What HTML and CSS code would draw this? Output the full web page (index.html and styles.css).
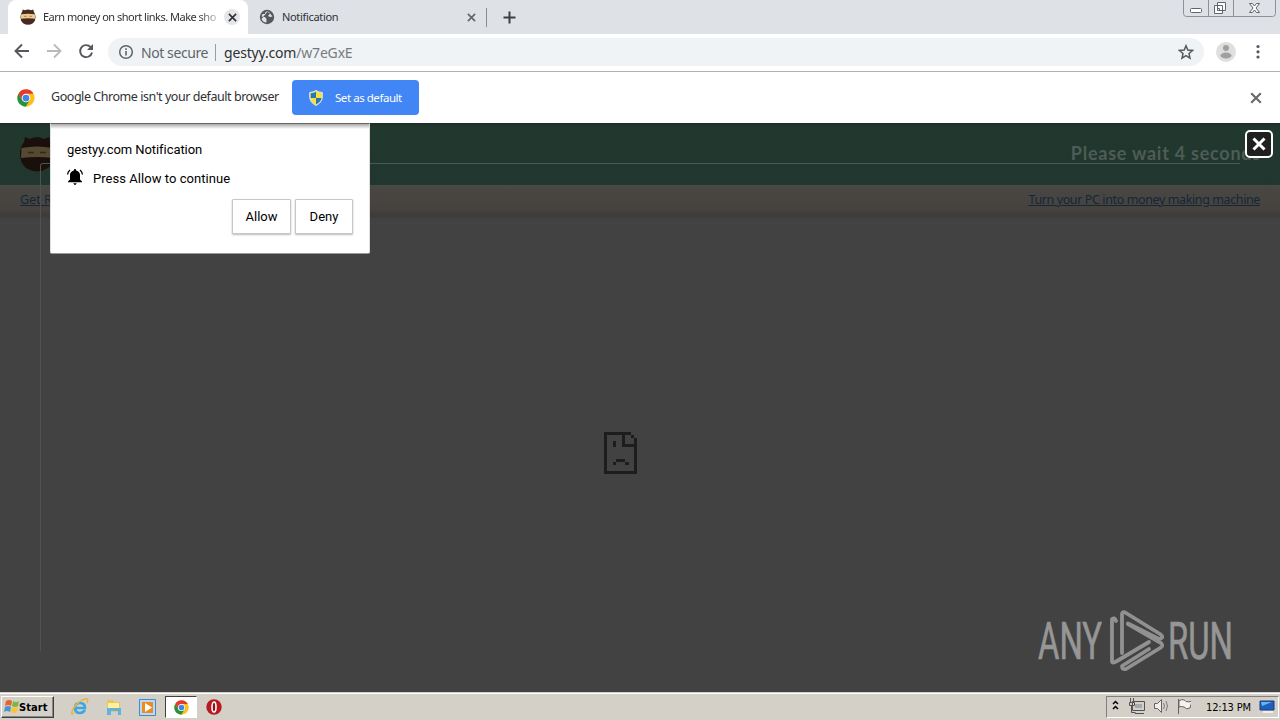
FILE: index.html
```html
<!DOCTYPE html>
<html lang="en"><head><meta charset="utf-8"><title>Notification</title><link rel="stylesheet" href="styles.css"></head>
<body>
<svg width="0" height="0" class="defs">
<symbol id="chrome" viewBox="0 0 48 48"><circle cx="24" cy="24" r="23" fill="#fbc116"/><path d="M4 12.5A23 23 0 0 1 44 12.5H24L14 30Z" fill="#e33b2e"/><path d="M4 12.5A23 23 0 0 0 23 47L34 30 24 35 14 30Z" fill="#229342"/><circle cx="24" cy="24" r="11.500" fill="#fff"/><circle cx="24" cy="24" r="9" fill="#4285e8"/></symbol>
<symbol id="ninja" viewBox="0 0 34 36"><path d="M4 6 5 1 10 3Q17 -1 24 3L29 1 30 6Q34 11 34 18Q34 27 28 32Q17 39 6 32Q0 27 0 18Q0 11 4 6Z" fill="#49291f"/><path d="M1.500 12Q17 9 32.500 12L33 22Q17 20 1 22Z" fill="#e8cd8d"/><path d="M8 16.500h6M20 16.500h6" stroke="#8c6845" stroke-width="1.500"/></symbol>
<symbol id="x" viewBox="0 0 10 10"><path d="M1 1 9 9M9 1 1 9" stroke="currentColor" stroke-width="1.800" fill="none"/></symbol>
</svg>
<header class="tabs">
 <div class="tab active"><svg class="fav"><use href="#ninja"/></svg><span class="tabtext fade">Earn money on short links. Make sho</span><span class="round"><svg width="9" height="9"><use href="#x"/></svg></span></div>
 <div class="tab second"><svg class="globe" viewBox="0 0 16 16"><circle cx="8" cy="8" r="7.200" fill="#55595e"/><path d="M9 2Q5.500 3 6 5H3.500L2.500 7.500 6 8l1.500 2v3.500Q4 13.500 2.500 10M9 2q0 2 2 2.500L9 7l2 1 2.500-.5" fill="#dee1e6"/></svg><span class="tabtext">Notification</span><svg class="tabx" width="9" height="9"><use href="#x"/></svg></div>
 <svg class="plus" width="13" height="13" viewBox="0 0 13 13"><path d="M6.500 .5v12M.5 6.500h12" stroke="#3c4043" stroke-width="2"/></svg>
 <svg class="winctl" width="94" height="18" viewBox="0 0 94 18"><path d="M.5 0V13.500Q.5 16.500 3.500 16.500H89.500Q92.500 16.500 92.500 13.500V0M25.500 0V16M50.500 0V16" fill="none" stroke="#8e9197"/><rect x="7.500" y="8.500" width="11" height="4" rx="1" fill="#fff" stroke="#62656c"/><path d="M34.500 2.500h8v8h-8zM31.500 5.500h8v8h-8zM34.500 8.500h2v2h-2z" fill="#fff" stroke="#62656c"/><path d="m66.500 3.500h3l2 2.500 2-2.500h3l-3.500 4.500 3.500 4.500h-3l-2-2.500-2 2.500h-3l3.500-4.500z" fill="#fff" stroke="#62656c"/></svg>
</header>
<div class="toolbar">
 <svg class="nav" width="100" height="36" viewBox="0 0 100 36" fill="none" stroke-width="1.900"><path d="M29 17H16M22 10.500 15.500 17l6.500 6.500" stroke="#55585c"/><path d="M47 17H60M54 10.500 60.500 17 54 23.500" stroke="#b8babd"/><path d="M90.500 13A6 6 0 1 0 92 18.500" stroke="#55585c"/><path d="M93 10v6h-6z" fill="#55585c"/></svg>
 <div class="omni"><svg width="16" height="16" viewBox="0 0 16 16"><circle cx="8" cy="8" r="6.300" fill="none" stroke="#5f6368" stroke-width="1.500"/><path d="M8 7v4.500M8 4.300v1.600" stroke="#5f6368" stroke-width="1.600"/></svg><span class="notsec">Not secure</span><i></i><span class="url">gestyy.com<b>/w7eGxE</b></span><svg class="star" width="16" height="16" viewBox="0 0 16 16"><path d="m8 1.800 1.800 4.300 4.700.4-3.500 3 1 4.600-4-2.400-4 2.400 1-4.600-3.500-3 4.700-.4Z" fill="none" stroke="#55595e" stroke-width="1.500"/></svg></div>
 <svg class="avatar" width="20" height="20" viewBox="0 0 20 20"><circle cx="10" cy="10" r="10" fill="#dfdfdf"/><circle cx="10" cy="6" r="3" fill="#a0a0a0"/><ellipse cx="10" cy="13.500" rx="5.500" ry="3" fill="#a0a0a0"/></svg>
 <svg class="dots" width="4" height="16" viewBox="0 0 4 16" fill="#55595e"><circle cx="2" cy="2.500" r="1.600"/><circle cx="2" cy="7.800" r="1.600"/><circle cx="2" cy="13" r="1.600"/></svg>
</div>
<div class="infobar"><svg width="18" height="18"><use href="#chrome"/></svg><span class="infotext">Google Chrome isn't your default browser</span><button><svg width="14" height="16" viewBox="0 0 14 16"><path d="M7 .5Q10 2.500 13.300 2.500V7Q13 12.500 7 15.500 1 12.500.7 7V2.500Q4 2.500 7 .5Z" fill="#f8df40" stroke="#d7e8ed"/><path d="M7 1.800V8H1.700V3.300Q4 3.300 7 1.800ZM7 8h5.400Q12 12 7 14.400Z" fill="#2677b8"/></svg><span>Set as default</span></button><svg class="infox" width="12" height="12"><use href="#x"/></svg></div>
<main>
 <div class="green"><svg class="logo" width="34" height="36"><use href="#ninja"/></svg><span class="wait">Please wait 4 seconds</span></div>
 <div class="links"><a>Get R</a><a class="turn">Turn your PC into money making machine</a></div>
 <div class="frame"></div>
 <svg class="sad" width="33" height="42" viewBox="0 0 33 42" shape-rendering="crispEdges"><path d="M0 0h27v3h3v3h3v36H0zM3 3v36h27V15H18V3zM21 3v9h9V6h-3V3z" fill="#1d1d1d" fill-rule="evenodd"/><path d="M9 9h3v6H9zM12 27h9v3h-9zM9 30h3v3H9zM21 30h4v3h-4z" fill="#1d1d1d"/></svg>
 <section class="dialog"><p>gestyy.com Notification</p><div class="press"><svg width="16" height="16" viewBox="0 0 16 16"><path d="M8 0q1.200 0 1.200 1.400Q13 2.500 13 6v4.500l2 2v.8H1v-.8l2-2V6q0-3.500 3.800-4.600Q6.800 0 8 0ZM6.300 14.200h3.400Q9 16 8 16t-1.700-1.800Z"/><path d="M3 1Q.8 2.500.6 5.500M13 1q2.200 1.500 2.400 4.500" fill="none" stroke="#000" stroke-width="1.300"/></svg><span>Press Allow to continue</span></div><div class="actions"><button>Allow</button><button>Deny</button></div></section>
 <svg class="closebox" width="28" height="28" viewBox="0 0 28 28"><rect x="1" y="1" width="26" height="26" rx="4" fill="#202020" stroke="#fff" stroke-width="2"/><path d="m8.500 8.500 11 11m0-11-11 11" stroke="#fff" stroke-width="3"/></svg>
 <svg class="anyrun" width="200" height="64" viewBox="0 0 200 64"><g fill="#969696" stroke="#969696" stroke-width=".7"><text x="0" y="49" textLength="64" lengthAdjust="spacingAndGlyphs">ANY</text><text x="130" y="49" textLength="65" lengthAdjust="spacingAndGlyphs">RUN</text></g><g fill="none" stroke="#919191" stroke-width="3.800" stroke-linejoin="round" stroke-linecap="round"><path d="M84 43V4Q84 1 88 3L122 24Q127 28 121 29L90 13.500"/><path d="M78 11Q77 7 74 9V51Q74 54 79 51L111 32"/><path d="M90 14 123 33Q126 36 122 38L88 59Q84 60 84 56L111 39"/></g></svg>
</main>
<footer>
 <button class="start"><svg width="16" height="16" viewBox="0 0 16 16"><path d="M3 2q3-2 6 0L8 7Q5 5 2 7Z" fill="#e8622c"/><path d="M10 2q3 2 6 0l-1 5q-3 2-6 0Z" fill="#7db742"/><path d="M2 8q3-2 6 0l-1 5q-3-2-6 0Z" fill="#4b91d5"/><path d="M9 8q3 2 6 0l-1 5q-3 2-6 0Z" fill="#f8c72d"/></svg><span>Start</span></button>
 <svg class="ie" width="18" height="18" viewBox="0 0 18 18"><path d="M14 12Q12 15 9 15 4 15 4 10T9 5q5 0 5 5H5" fill="none" stroke="#3ba6e4" stroke-width="2.600"/><path d="M3 15Q-1 18 2 11 7 3 14 1q4-1 2 4" fill="none" stroke="#e7b53c" stroke-width="1.500"/></svg>
 <svg class="folder" width="18" height="18" viewBox="0 0 18 18"><path d="M2 2h6l1 2h6v10H2Z" fill="#eac65b"/><path d="M3 5h11v7H3Z" fill="#fff0a0"/><path d="M2 17V10h14v7h-3v-4H6v4Z" fill="#62b2e0"/></svg>
 <svg class="media" width="17" height="17" viewBox="0 0 17 17"><path d="M.5.5h16v16H.5Z" fill="#b6dafa" stroke="#4689c4"/><path d="M3 3h11v11H3Z" fill="#f18a1b"/><circle cx="8.500" cy="8.500" r="5" fill="#f28b1d"/><path d="m6 4 7 4.500-7 4.500Z" fill="#fff"/></svg>
 <span class="current"><svg width="15" height="15"><use href="#chrome"/></svg></span>
 <svg class="opera" width="16" height="16" viewBox="0 0 16 16"><circle cx="8" cy="8" r="7.700" fill="#b71922"/><ellipse cx="8" cy="8" rx="2" ry="5" fill="#961015" stroke="#fff" stroke-width="1.600"/></svg>
 <div class="tray"><svg width="84" height="20" viewBox="0 0 84 20" fill="none"><path d="m6 7 2.500-2.500L11 7M6 12l2.500-2.500L11 12" stroke="#000" stroke-width="1.500"/><path d="M25.500 4.500h12v9h-12zM28 16.500h9M23.500 1v4M26.500 1v4M22.500 5.500h5v3h-5zM24.500 8.500v7h4" stroke="#55534f"/><path d="M28 7h7v4h-7Z" fill="#a7aaac"/><path d="M47.500 6.500h3l4-4v13l-4-4h-3Z" fill="#eee" stroke="#66635e"/><path d="M56.500 6q2 3 0 6M59 4q3 5 0 10" stroke="#7e7b75"/><path d="M71.500 2v15M72 3.500q5-2 7 1 3 1 6-.5l-2 7q-4 2-6-1-3-1-5 0Z" fill="#f3f2ee" stroke="#66635e"/></svg><time>12:13 PM</time><svg class="desk" width="16" height="14" viewBox="0 0 16 14"><path d="M1 1h14v9H1Z" fill="#1c60bc" stroke="#173f80"/><path d="M2 2h11L3 6Z" fill="#6ab3ed"/><path d="M4 12h10" stroke="#eee" stroke-width="2"/></svg></div>
</footer>
</body></html>
```
FILE: styles.css
```css
*{box-sizing:border-box}
body{margin:0;width:1280px;height:720px;overflow:hidden;display:flex;flex-direction:column;background:#fff;font-family:"Noto Sans",sans-serif;color:#303134}
svg{display:block;flex:none}
.defs{position:absolute}
button{font:inherit;margin:0;padding:0}
.tabs{height:34px;background:#dee1e6;display:flex;flex:none;align-items:center}
.tab{height:34px;display:flex;align-items:center;flex:none}
.active{width:240px;margin-left:8px;background:#fff;border-radius:8px 8px 0 0;padding-left:12px}
.fav{width:16px;height:16px}
.tabtext{font-size:11px;letter-spacing:-.12px;white-space:nowrap;line-height:18px}
.active .tabtext{margin-left:7px;width:176px;letter-spacing:-.5px}
.fade{-webkit-mask-image:linear-gradient(90deg,#000 88%,rgba(0,0,0,.2))}
.round{width:16px;height:16px;border-radius:50%;background:#e5e6e8;display:flex;align-items:center;justify-content:center;margin-left:5px}
.second{width:239px;padding:0 11px;position:relative}
.second:after{content:"";position:absolute;right:0;top:8px;width:1px;height:19px;background:#898c91}
.globe{width:16px;height:16px;margin-left:0}
.second .tabtext{margin-left:7px;letter-spacing:-.32px}
.tabx{margin-left:auto;color:#62656a}
.plus{margin-left:16px}
.winctl{margin-left:auto;margin-right:3px;align-self:flex-start}
.toolbar{height:38px;border-bottom:1px solid #b0b1b3;display:flex;flex:none;align-items:center;padding-bottom:1px}
.omni{width:1096px;height:28px;margin-left:8px;background:#f0f3f5;border-radius:14px;display:flex;align-items:center;padding:0 10px;font-size:14px}
.notsec{margin-left:7px;width:67px;color:#606469;letter-spacing:-.42px;white-space:nowrap}
.omni i{width:1px;height:17px;background:#999ca0;margin:0 8px 0 7px}
.url{letter-spacing:-.18px}
.url b{font-weight:400;color:#777b80}
.star{margin-left:auto}
.avatar{margin-left:12px}
.dots{margin-left:20px}
.infobar{height:51px;flex:none;display:flex;align-items:center;padding-left:17px}
.infotext{font-size:12.5px;margin-left:16px;width:228px;white-space:nowrap;letter-spacing:-.45px;padding-bottom:2px}
.infobar button{width:127px;height:35px;margin-left:13px;border:0;border-radius:4px;background:#4285f4;color:#fff;display:flex;align-items:center;padding-left:17px;font-size:11.5px}
.infobar button span{margin-left:12px;white-space:nowrap;letter-spacing:-.45px;padding-bottom:1px}
.infox{margin-left:auto;margin-right:18px;color:#6a6a6a}
main{height:569px;flex:none;position:relative;background:#424242;overflow:hidden}
.green{height:62px;background:linear-gradient(#1d2b26,#21382f 4px,#21362e);display:flex;align-items:center;justify-content:space-between;padding:0 20px}
.logo{filter:brightness(.36)}
.wait{font:700 18px/24px Lato,sans-serif;color:#4e5c57;letter-spacing:.75px;white-space:nowrap;margin-right:-1px;padding-bottom:2px}
.links{height:34px;background:linear-gradient(#494949,#484643 5px,#46433f 24px,#3d3b39 31px,#424242);display:flex;justify-content:space-between;padding:6px 20px 0;font-size:12.5px;line-height:18px}
.links a{color:#152638;text-decoration:underline;white-space:nowrap}
.turn{letter-spacing:-.39px}
.frame{position:absolute;left:40px;top:40px;width:1200px;height:488px;border-top:1px solid #4a5953;border-left:1px solid #515151;border-radius:3px 0 0}
.sad{position:absolute;left:604px;top:309px}
.dialog{position:absolute;left:50px;top:0;width:320px;height:131px;background:linear-gradient(#aaa,#fff 5px);border:1px solid #999;border-left-color:#ddd;border-right-color:#ddd;border-top-color:#666;border-radius:0 0 2px 2px;padding:17px 16px 0;color:#000;font:13px/18px Roboto,sans-serif;letter-spacing:-.07px}
.dialog p{margin:0}
.press{display:flex;gap:10px;margin-top:11px}
.press svg{margin-top:-1px}
.press span{letter-spacing:.05px}
.actions{display:flex;justify-content:flex-end;gap:4px;margin-top:11px}
.actions button{width:59px;height:35px;background:#fff;border:1px solid #c7c7c7;box-shadow:0 1px 2px #bbb;color:#000;border-radius:1px}
.actions button:last-child{width:58px}
.closebox{position:absolute;left:1245px;top:7px}
.anyrun{position:absolute;left:1038px;top:487px;font:400 51px Roboto,sans-serif}
footer{height:28px;flex:none;background:#d4d0c8;border-top:1px solid #d4d0c8;box-shadow:inset 0 1px #fff;display:flex;align-items:center;padding-top:1px}
.start{width:53px;height:22px;margin-left:1px;border:1px solid;border-color:#fff #404040 #404040 #fff;box-shadow:inset -1px -1px #888;background:#d4d0c8;display:flex;align-items:center;font:700 11px "DejaVu Sans Condensed",sans-serif;color:#000;padding-left:1px}
.start span{letter-spacing:.1px}
.ie{margin-left:17px}
.folder{margin-left:16px}
.media{margin-left:16px}
.current{width:32px;height:22px;margin-left:9px;border:1px solid;border-color:#404040 #fff #fff #404040;background:#fff;display:flex;align-items:center;justify-content:center}
.opera{margin-left:9px}
.tray{margin-left:auto;margin-right:1px;width:173px;height:22px;border:1px solid;border-color:#808080 #fff #fff #808080;display:flex;align-items:center}
.tray time{font:11px "DejaVu Sans Condensed",sans-serif;color:#000;margin-left:15px;width:46px;white-space:nowrap;letter-spacing:-.15px}
.desk{margin-left:7px}
```
